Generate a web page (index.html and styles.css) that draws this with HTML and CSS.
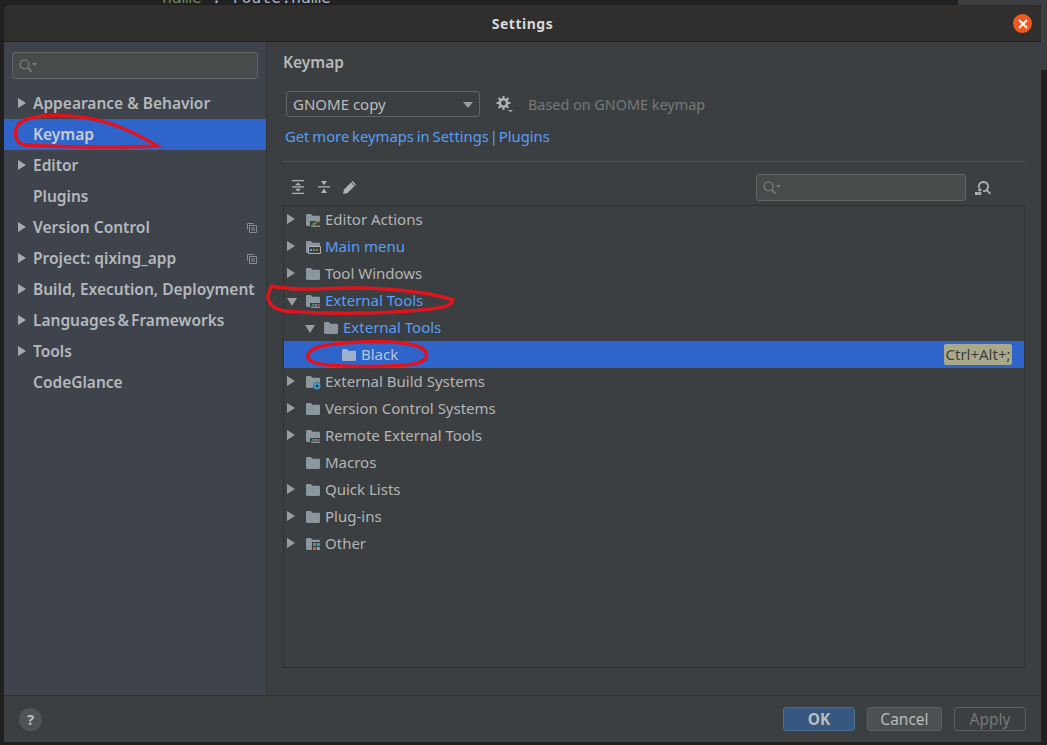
FILE: index.html
```html
<!DOCTYPE html>
<html lang="en">

<head>
    <meta charset="UTF-8">
    <meta name="viewport" content="width=device-width, initial-scale=1.0">
    <title>Settings</title>
    <link rel="stylesheet" href="styles.css">
</head>

<body>
    <svg class="defs" width="0" height="0">
        <symbol id="folder" viewBox="0 0 14 12">
            <path d="M0 1.2C0 .5.5 0 1.2 0h3.6l1.6 1.8h6.4c.7 0 1.2.5 1.2 1.2v7.8c0 .7-.5 1.2-1.2 1.2H1.2C.5 12 0 11.500 0 10.800z" fill="currentColor" />
        </symbol>
        <symbol id="search" viewBox="0 0 18 14">
            <circle cx="5.500" cy="5.500" r="4.500" fill="none" stroke="#7d8082" stroke-width="1.200" />
            <path d="M8.800 8.800l3.700 3.900" stroke="#7d8082" stroke-width="1.500" />
            <path d="M13 4h5l-2.500 2.800z" fill="#7d8082" />
        </symbol>
        <symbol id="project" viewBox="0 0 10 10">
            <path d="M.5 6.500V.5h6M2.500 2.500h7v7h-7zM4 5h4M4 7h4" fill="none" stroke="#8a8d8f" />
        </symbol>
        <symbol id="tools-bar" viewBox="0 0 14 12" overflow="visible">
            <path d="M4 8h11v5H4z" fill="#3c3f41" />
            <path d="M6 9h2v1.800H6z" fill="#499c54" />
            <path d="M8.800 9h2v1.800h-2z" fill="#589df6" />
            <path d="M11.600 9h2v1.800h-2z" fill="#c7623a" />
            <path d="M5 12.200h9" stroke="#b4b4b4" />
        </symbol>
    </svg>

    <div class="backdrop"><span class="str">"name"</span>: route.name</div>
    <div class="backdrop-top"></div>
    <div class="backdrop-side"></div>

    <div class="window">
        <div class="titlebar">
            <span class="title">Settings</span>
            <span class="close">
                <svg width="10" height="10" viewBox="0 0 10 10"><path d="M1 1l8 8M9 1l-8 8" stroke="#fff" stroke-width="1.800" /></svg>
            </span>
        </div>

        <div class="content">
            <div class="sidebar">
                <div class="search side-search">
                    <svg width="18" height="14"><use href="#search" /></svg>
                </div>
                <ul class="nav">
                    <li class="arrow">Appearance &amp; Behavior</li>
                    <li class="active">Keymap</li>
                    <li class="arrow">Editor</li>
                    <li>Plugins</li>
                    <li class="arrow">Version Control<svg width="10" height="10"><use href="#project" /></svg></li>
                    <li class="arrow">Project: qixing_app<svg width="10" height="10"><use href="#project" /></svg></li>
                    <li class="arrow">Build, Execution, Deployment</li>
                    <li class="arrow tight">Languages &amp; Frameworks</li>
                    <li class="arrow">Tools</li>
                    <li>CodeGlance</li>
                </ul>
            </div>

            <div class="main">
                <h2>Keymap</h2>
                <div class="keymap-row">
                    <div class="combo">GNOME copy</div>
                    <svg class="gear" width="17" height="16" viewBox="0 0 17 16">
                        <circle cx="7.500" cy="7" r="3.700" fill="none" stroke="#afb1b3" stroke-width="2.600" />
                        <path d="M7.500 0v3M7.500 11v3M.5 7h3M11.500 7h3M2.500 2l2 2M10.500 10l2 2M12.500 2l-2 2M4.500 10l-2 2" stroke="#afb1b3" stroke-width="2" />
                        <path d="M12 14h5l-2.500 2z" fill="#afb1b3" />
                    </svg>
                    <span class="based">Based on GNOME keymap</span>
                </div>
                <div class="link">Get more keymaps in Settings <span class="pipe">|</span> Plugins</div>
                <div class="separator"></div>

                <div class="toolbar">
                    <svg class="tool" width="14" height="14" viewBox="0 0 14 14">
                        <path d="M1 .7h12M1 13.300h12M1 6.900h12" stroke="#afb1b3" stroke-width="1.300" />
                        <path d="M7 2.500l3 2.700H4zM7 11.500l3-2.700H4z" fill="#afb1b3" />
                    </svg>
                    <svg class="tool" width="14" height="14" viewBox="0 0 14 14">
                        <path d="M1 6.900h12" stroke="#afb1b3" stroke-width="1.300" />
                        <path d="M7 5.200L4 1h6zM7 8.600l3 4.300H4z" fill="#afb1b3" />
                    </svg>
                    <svg class="tool" width="14" height="14" viewBox="0 0 14 14">
                        <path d="M0 14l1-4.500L9.500 1 13 4.500 4.500 13z" fill="#afb1b3" />
                        <path d="M8.300 2.500l3.200 3.200" stroke="#3c3f41" />
                    </svg>
                    <div class="search tree-search">
                        <svg width="18" height="14"><use href="#search" /></svg>
                    </div>
                    <svg class="find" width="16" height="14" viewBox="0 0 16 14">
                        <path d="M4 7C3 3.500 5.500 1 8.500 1S14 3.500 13 6.500 10 10.500 8 10M11.800 9l3.500 4" fill="none" stroke="#afb1b3" stroke-width="1.800" />
                        <path d="M3.300 7.500h3v2.700h-3zM0 11h3v3H0zM3.300 11h3v3h-3z" fill="#afb1b3" />
                    </svg>
                </div>

                <ul class="tree">
                    <li class="row closed">
                        <svg class="ico" width="14" height="12" viewBox="0 0 14 12">
                            <use href="#folder" />
                            <path d="M4 7h11v6H4z" fill="#3c3f41" />
                            <path d="M6.500 9.500l1.500 1 3-3.500" fill="none" stroke="#499c54" stroke-width="1.800" />
                            <path d="M11.500 6.500h2v2h-2z" fill="#c7623a" />
                            <path d="M5 12.200h9" stroke="#b4b4b4" />
                        </svg>
                        <span>Editor Actions</span>
                    </li>
                    <li class="row closed">
                        <svg class="ico" width="14" height="12" viewBox="0 0 14 12">
                            <use href="#folder" />
                            <path d="M2.500 5.500h12v7h-12z" fill="#3c3f41" stroke="#afb1b3" />
                            <path d="M4 8h2v2H4z" fill="#589df6" />
                            <path d="M7 8h2v2H7z" fill="#499c54" />
                            <path d="M10 8h2v2h-2z" fill="#c7623a" />
                        </svg>
                        <span class="blue">Main menu</span>
                    </li>
                    <li class="row closed">
                        <svg class="ico" width="14" height="12"><use href="#folder" /></svg>
                        <span>Tool Windows</span>
                    </li>
                    <li class="row open">
                        <svg class="ico" width="14" height="12" viewBox="0 0 14 12">
                            <use href="#folder" />
                            <use href="#tools-bar" width="14" height="12" />
                        </svg>
                        <span class="blue">External Tools</span>
                    </li>
                    <li class="row open level2">
                        <svg class="ico" width="14" height="12"><use href="#folder" /></svg>
                        <span class="blue">External Tools</span>
                    </li>
                    <li class="row level3 selected">
                        <svg class="ico" width="14" height="12"><use href="#folder" /></svg>
                        <span>Black</span>
                        <span class="shortcut">Ctrl+Alt+;</span>
                    </li>
                    <li class="row closed">
                        <svg class="ico" width="14" height="12" viewBox="0 0 14 12">
                            <use href="#folder" />
                            <circle cx="11" cy="10" r="3.800" fill="#3c3f41" />
                            <circle cx="11" cy="10" r="2.500" fill="none" stroke="#3d9bd6" stroke-width="2" />
                        </svg>
                        <span>External Build Systems</span>
                    </li>
                    <li class="row closed">
                        <svg class="ico" width="14" height="12"><use href="#folder" /></svg>
                        <span>Version Control Systems</span>
                    </li>
                    <li class="row closed">
                        <svg class="ico" width="14" height="12" viewBox="0 0 14 12">
                            <use href="#folder" />
                            <use href="#tools-bar" width="14" height="12" />
                        </svg>
                        <span>Remote External Tools</span>
                    </li>
                    <li class="row">
                        <svg class="ico" width="14" height="12"><use href="#folder" /></svg>
                        <span>Macros</span>
                    </li>
                    <li class="row closed">
                        <svg class="ico" width="14" height="12"><use href="#folder" /></svg>
                        <span>Quick Lists</span>
                    </li>
                    <li class="row closed">
                        <svg class="ico" width="14" height="12"><use href="#folder" /></svg>
                        <span>Plug-ins</span>
                    </li>
                    <li class="row closed">
                        <svg class="ico" width="14" height="12" viewBox="0 0 14 12">
                            <use href="#folder" />
                            <path d="M6 4h9v10H6z" fill="#3c3f41" />
                            <path d="M7 5h3v3H7z" fill="#499c54" />
                            <path d="M10.800 5h3v3h-3z" fill="#3d9bd6" />
                            <path d="M7 9h3v3H7z" fill="#c7623a" />
                            <path d="M10.800 9h3v3h-3z" fill="#9a9da0" />
                        </svg>
                        <span>Other</span>
                    </li>
                </ul>
            </div>
        </div>

        <div class="footer">
            <span class="help">?</span>
            <div class="buttons">
                <span class="btn ok">OK</span>
                <span class="btn cancel">Cancel</span>
                <span class="btn apply">Apply</span>
            </div>
        </div>
    </div>

    <!-- red marks drawn over the screenshot -->
    <svg class="marks" width="1047" height="745" viewBox="0 0 1047 745">
        <path d="M157 146C120 148 60 147 24 145C14 142 13 130 20 123C32 114 60 115 80 117C110 120 140 135 157 146z" />
        <path d="M272 286C300 292 330 287 360 288C395 289 430 292 453 300C452 306 445 308 410 311C370 314 320 314 285 311C272 309 262 300 272 286z" />
        <path d="M308 355C310 347 325 344 360 342C395 341 420 343 426 352C429 360 420 364 405 365C385 367 340 367 320 364C310 362 307 359 308 355z" />
    </svg>
</body>

</html>
```

FILE: styles.css
```css
/* General Styles */
* {
    box-sizing: border-box;
}

body {
    margin: 0;
    height: 745px;
    overflow: hidden;
    position: relative;
    background-color: #202021;
    font-family: 'Noto Sans', sans-serif;
    font-size: 15px;
    color: #bbbbbb;
}

ul {
    list-style: none;
    margin: 0;
    padding: 0;
}

.defs {
    position: absolute;
}

/* Editor behind the dialog */
.backdrop {
    position: absolute;
    left: 152px;
    top: -12px;
    font-family: 'DejaVu Sans Mono', monospace;
    font-size: 16.500px;
    color: #a9b7c6;
}

.backdrop .str {
    color: #6a8759;
}

.backdrop-top {
    position: absolute;
    left: 958px;
    right: 0;
    top: 0;
    height: 5px;
    background-color: #3c3f41;
}

.backdrop-side {
    position: absolute;
    right: 0;
    top: 0;
    width: 6px;
    height: 70px;
    background-color: #3c3f41;
}

/* Dialog */
.window {
    position: relative;
    margin: 5px 0 0 4px;
    width: 1037px;
    height: 737px;
    display: flex;
    flex-direction: column;
    background-color: #3c3f41;
    border-radius: 6px 6px 0 0;
    overflow: hidden;
}

.titlebar {
    height: 37px;
    flex: none;
    display: flex;
    align-items: center;
    justify-content: center;
    position: relative;
    background-color: #312e2e;
    border-bottom: 1px solid #1f1f1f;
}

.title {
    font-size: 14px;
    font-weight: 700;
    color: #d8d8d8;
    letter-spacing: 0.5px;
}

.close {
    position: absolute;
    right: 9px;
    top: 9px;
    width: 19px;
    height: 19px;
    border-radius: 50%;
    background-color: #f0591f;
    display: flex;
    align-items: center;
    justify-content: center;
}

.content {
    flex: 1;
    display: flex;
    min-height: 0;
}

/* Sidebar */
.sidebar {
    width: 263px;
    flex: none;
    padding-top: 10px;
    background-color: #3f434b;
    border-right: 1px solid #323232;
}

.search {
    display: flex;
    align-items: center;
    height: 27px;
    padding-left: 6px;
    background-color: #484b4c;
    border: 1px solid #646464;
    border-radius: 3px;
}

.side-search {
    margin: 0 8px 9px;
    width: 246px;
}

.nav li {
    height: 31px;
    display: flex;
    align-items: center;
    padding: 0 0 2px 29px;
    position: relative;
    font-size: 15.500px;
    font-weight: 600;
    color: #b4b8bc;
}

.nav li.tight {
    word-spacing: -2px;
}

.nav li.active {
    background-color: #2f65ca;
    color: #c9cdd3;
}

.nav li.arrow::before {
    content: "";
    position: absolute;
    left: 14px;
    top: 10px;
    border-left: 8px solid #a8abad;
    border-top: 5px solid transparent;
    border-bottom: 5px solid transparent;
}

.nav li svg {
    position: absolute;
    left: 243px;
    top: 11px;
}

/* Main panel */
.main {
    flex: 1;
    min-width: 0;
    padding-left: 16px;
}

h2 {
    margin: 0;
    height: 41px;
    padding-top: 9px;
    font-size: 15.500px;
    font-weight: 600;
    line-height: 22px;
    color: #b8b8b8;
}

.keymap-row {
    display: flex;
    align-items: center;
    height: 26px;
    margin: 8px 0 0 3px;
}

.combo {
    width: 194px;
    height: 26px;
    padding-left: 6px;
    line-height: 25px;
    font-size: 15px;
    border: 1px solid #646464;
    border-radius: 3px;
    background-color: #3c3f41;
    position: relative;
}

.combo::after {
    content: "";
    position: absolute;
    right: 6px;
    top: 10px;
    border-top: 6px solid #9a9da0;
    border-left: 5px solid transparent;
    border-right: 5px solid transparent;
}

.gear {
    margin-left: 16px;
}

.based {
    margin-left: 15px;
    font-size: 14.400px;
    color: #787878;
}

.link {
    margin: 7px 0 0 2px;
    height: 24px;
    line-height: 24px;
    font-size: 14.800px;
    word-spacing: -1px;
    color: #589df6;
}

.link .pipe {
    margin: 0 -2px;
}

.separator {
    height: 1px;
    margin-top: 13px;
    width: 742px;
    background-color: #515151;
}

.toolbar {
    display: flex;
    align-items: center;
    height: 27px;
    margin-top: 12px;
    width: 742px;
    padding-left: 8px;
    gap: 12px;
}

.toolbar .tool {
    margin-top: -1px;
}

.tree-search {
    width: 210px;
    margin-left: auto;
}

.find {
    margin-left: -3px;
    margin-right: 34px;
}

.tree {
    width: 742px;
    height: 463px;
    margin-top: 4px;
    border: 1px solid #2f3133;
}

.row {
    height: 27px;
    display: flex;
    align-items: center;
    padding-left: 22px;
    position: relative;
    font-size: 15px;
    color: #b4b4b4;
}

.row > span {
    margin-top: -1px;
}

.row .ico {
    color: #8a979f;
    margin-right: 5px;
    flex: none;
    overflow: visible;
}

.row.level2 {
    padding-left: 40px;
}

.row.level3 {
    padding-left: 58px;
}

.row .blue {
    color: #589df6;
}

.row.closed::before {
    content: "";
    position: absolute;
    left: 3px;
    top: 8px;
    border-left: 8px solid #9a9da0;
    border-top: 5px solid transparent;
    border-bottom: 5px solid transparent;
}

.row.open::before {
    content: "";
    position: absolute;
    left: 3px;
    top: 11px;
    border-top: 8px solid #9a9da0;
    border-left: 5px solid transparent;
    border-right: 5px solid transparent;
}

.row.open.level2::before {
    left: 21px;
}

.row.selected {
    background-color: #2f65ca;
    color: #b8c4d8;
}

.row.selected .ico {
    color: #9fb0cc;
}

.row .shortcut {
    position: absolute;
    right: 12px;
    top: 3px;
    height: 21px;
    margin-top: 0;
    width: 68px;
    line-height: 21px;
    text-align: center;
    color: #3c3f41;
    background-color: #aaa98b;
    border-radius: 2px;
    font-size: 15px;
}

/* Footer */
.footer {
    height: 47px;
    flex: none;
    display: flex;
    align-items: center;
    justify-content: space-between;
    padding: 0 15px;
    border-top: 1px solid #323232;
}

.help {
    width: 23px;
    height: 23px;
    border-radius: 50%;
    background-color: #505354;
    color: #bbbbbb;
    font-size: 15px;
    font-weight: 700;
    text-align: center;
    line-height: 23px;
}

.buttons {
    display: flex;
    gap: 12px;
}

.btn {
    height: 24px;
    line-height: 22px;
    text-align: center;
    border: 1px solid;
    border-radius: 3px;
    font-size: 15.500px;
}

.ok {
    width: 72px;
    background-color: #365880;
    border-color: #4c708c;
    color: #bbbbbb;
    font-weight: 700;
}

.cancel {
    width: 75px;
    background-color: #4c5052;
    border-color: #5e6060;
}

.apply {
    width: 72px;
    border-color: #5e6060;
    color: #777777;
}

/* Red marks */
.marks {
    position: absolute;
    left: 0;
    top: 0;
    pointer-events: none;
}

.marks path {
    fill: none;
    stroke: #e2131c;
    stroke-width: 3.500;
}
```
